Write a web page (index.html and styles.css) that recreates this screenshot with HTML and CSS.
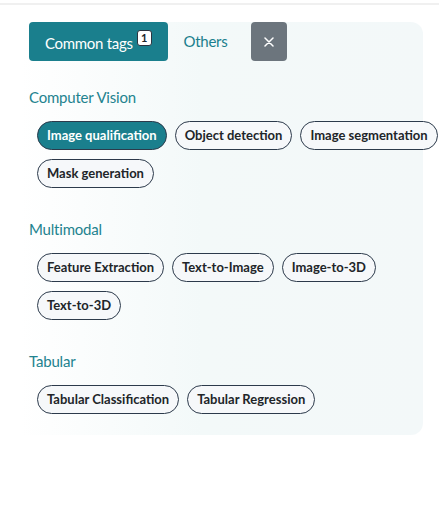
FILE: index.html
```html
<!DOCTYPE html>
<html lang="en">
<head>
<meta charset="utf-8">
<title>Tags</title>
<link rel="stylesheet" href="styles.css">
</head>
<body>
<div class="topbar"></div>
<div class="panel">
  <div class="tabs">
    <button class="tab tab-active">Common tags <span class="badge">1</span></button>
    <button class="tab tab-link">Others</button>
    <button class="tab tab-close" aria-label="Close">
      <svg width="10" height="10" viewBox="0 0 10 10"><path d="M1 1L9 9M9 1L1 9" stroke="#fff" stroke-width="1.5" stroke-linecap="round"/></svg>
    </button>
  </div>

  <section class="group">
    <h3 class="group-title">Computer Vision</h3>
    <div class="chips">
      <span class="chip chip-active">Image qualification</span>
      <span class="chip">Object detection</span>
      <span class="chip">Image segmentation</span>
      <span class="chip">Mask generation</span>
    </div>
  </section>

  <section class="group">
    <h3 class="group-title">Multimodal</h3>
    <div class="chips">
      <span class="chip">Feature Extraction</span>
      <span class="chip">Text-to-Image</span>
      <span class="chip">Image-to-3D</span>
      <span class="chip">Text-to-3D</span>
    </div>
  </section>

  <section class="group">
    <h3 class="group-title">Tabular</h3>
    <div class="chips">
      <span class="chip">Tabular Classification</span>
      <span class="chip">Tabular Regression</span>
    </div>
  </section>
</div>
</body>
</html>
```
FILE: styles.css
```css
* { box-sizing: border-box; }
body {
  margin: 0;
  font-family: Lato, "Open Sans", sans-serif;
  color: #212529;
  background: #fff;
}
.topbar {
  height: 5px;
  border-bottom: 2px solid #f0f0f0;
}
.panel {
  margin: 17px 16px 0 20px;
  padding: 0 0 21px 9px;
  border-radius: 0 12px 12px 0;
  background: linear-gradient(to right, #ffffff 0%, #f3f9f9 45%, #f3f8f9 100%);
}
.tabs {
  display: flex;
  align-items: stretch;
  height: 39px;
}
.tab {
  font-family: inherit;
  font-size: 15px;
  letter-spacing: -0.3px;
  border: 0;
  border-radius: 4px;
  padding: 0 16px;
  background: transparent;
  cursor: pointer;
}
.tab-active {
  background: #1a7f8d;
  color: #fff;
  display: flex;
  align-items: center;
  gap: 4px;
  padding-top: 2px;
}
.badge {
  display: inline-flex;
  align-items: center;
  justify-content: center;
  width: 15px;
  height: 16px;
  margin-top: -10px;
  background: #fff;
  color: #212529;
  border: 1px solid #2b3440;
  border-radius: 3px;
  font-size: 11px;
  font-weight: 700;
  letter-spacing: 0;
}
.tab-link {
  color: #1a7f8d;
  padding-bottom: 2px;
}
.tab-close {
  width: 36px;
  margin-left: 8px;
  padding: 0;
  background: #6c757d;
  display: flex;
  align-items: center;
  justify-content: center;
}
.group {
  margin-top: 25px;
}
.group + .group {
  margin-top: 30px;
}
.group-title {
  margin: 0;
  font-size: 15px;
  letter-spacing: -0.2px;
  line-height: 22px;
  font-weight: 400;
  color: #23838f;
}
.chips {
  display: flex;
  flex-wrap: wrap;
  gap: 9px 8px;
  margin: 13px -30px 0 8px;
}
.chip {
  display: inline-block;
  font-size: 13px;
  font-weight: 700;
  line-height: 17px;
  padding: 5px 9px;
  height: 29px;
  border: 1px solid #2c3a4b;
  border-radius: 15px;
  background: #f6f8fa;
  color: #212529;
  white-space: nowrap;
}
.chip-active {
  background: #1a7f8d;
  color: #fff;
}
```
